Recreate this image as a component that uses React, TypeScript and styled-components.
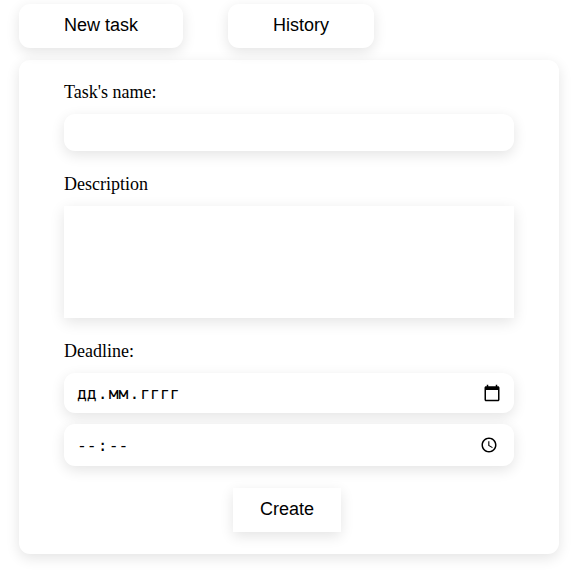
import React from "react";
import styled, { createGlobalStyle, css } from "styled-components";

const GlobalStyle = createGlobalStyle`
  *, *::before, *::after { box-sizing: border-box; }
  body { margin: 0; background: #fff; color: #000; }
`;

const raised = css`
  background: #fff;
  box-shadow: 0 4px 14px rgba(0, 0, 0, 0.11);
`;

const Page = styled.main`
  width: 540px;
  min-height: 582px;
  margin-left: 19px;
  padding-top: 4px;
  font: 18px/20px "Liberation Serif", "Times New Roman", serif;
`;

const Tabs = styled.nav`
  display: flex;
  gap: 45px;
  margin-bottom: 12px;
`;

const Button = styled.button<{ $width: number; $rounded?: boolean }>`
  ${raised}
  width: ${(p) => p.$width}px;
  height: 44px;
  padding: 0 0 2px;
  border: 0;
  border-radius: ${(p) => (p.$rounded ? 11 : 0)}px;
  color: #000;
  font: 18px "Liberation Sans", Arial, sans-serif;
`;

const Card = styled.form`
  ${raised}
  display: flex;
  flex-direction: column;
  height: 494px;
  padding: 22px 45px 22px;
  border-radius: 11px;
`;

const Label = styled.label<{ $before?: number }>`
  height: 20px;
  margin: ${(p) => p.$before ?? 0}px 0 12px;
`;

const TextField = styled.input`
  ${raised}
  height: 37px;
  padding: 0 13px;
  border: 0;
  border-radius: 11px;
  outline: 0;
`;

const TextArea = styled.textarea`
  ${raised}
  height: 112px;
  padding: 9px 13px;
  border: 0;
  outline: 0;
  resize: none;
`;

const PickerField = styled.div<{ $height: number; $right: number }>`
  ${raised}
  display: flex;
  align-items: center;
  justify-content: space-between;
  flex: none;
  height: ${(p) => p.$height}px;
  padding: 0 ${(p) => p.$right}px 0 12px;
  border-radius: 11px;
  font: 16.4px/20px "DejaVu Sans Mono", Consolas, monospace;

  & + & { margin-top: 11px; }
`;

const Value = styled.span`
  display: flex;
  padding-top: 2px;
`;

const Segment = styled.span`
  padding: 0 1px;
`;

const Icon = styled.svg`
  display: block;
  width: 18px;
  height: 18px;
`;

const Actions = styled.div`
  display: flex;
  justify-content: center;
  margin-top: 22px;
  padding-right: 4px;
`;

export default function App() {
  return (
    <>
      <GlobalStyle />
      <Page>
        <Tabs>
          <Button type="button" $width={164} $rounded>New task</Button>
          <Button type="button" $width={146} $rounded>History</Button>
        </Tabs>
        <Card>
          <Label htmlFor="name">Task's name:</Label>
          <TextField id="name" />
          <Label htmlFor="description" $before={23}>Description</Label>
          <TextArea id="description" />
          <Label $before={23}>Deadline:</Label>
          <PickerField $height={40} $right={13}>
            <Value>
              <Segment>дд</Segment>.<Segment>мм</Segment>.<Segment>гггг</Segment>
            </Value>
            <Icon viewBox="0 0 24 24" aria-hidden="true">
              <path d="M20 3h-1V1h-2v2H7V1H5v2H4c-1.1 0-2 .9-2 2v16c0 1.1.9 2 2 2h16c1.1 0 2-.9 2-2V5c0-1.1-.9-2-2-2zm0 18H4V8h16v13z" />
            </Icon>
          </PickerField>
          <PickerField $height={42} $right={16}>
            <Value>
              <Segment>--</Segment>:<Segment>--</Segment>
            </Value>
            <Icon viewBox="0 0 24 24" aria-hidden="true">
              <path d="M11.99 2C6.47 2 2 6.48 2 12s4.47 10 9.99 10C17.52 22 22 17.52 22 12S17.52 2 11.99 2zM12 20c-4.42 0-8-3.58-8-8s3.58-8 8-8 8 3.58 8 8-3.58 8-8 8zm.5-13H11v6l5.25 3.15.75-1.23-4.5-2.67z" />
            </Icon>
          </PickerField>
          <Actions>
            <Button type="button" $width={108}>Create</Button>
          </Actions>
        </Card>
      </Page>
    </>
  );
}
